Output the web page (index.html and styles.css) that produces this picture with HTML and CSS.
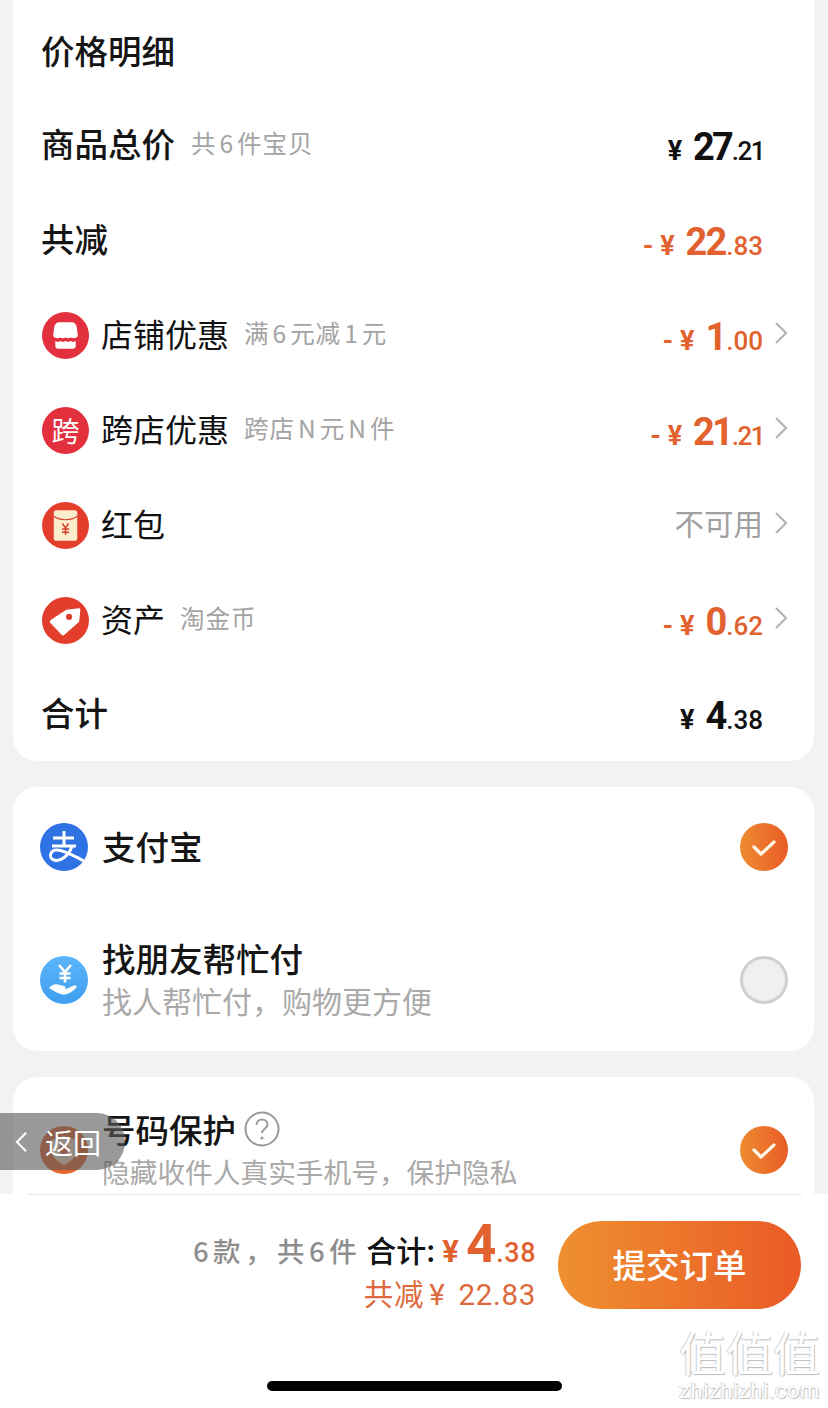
FILE: index.html
```html
<!DOCTYPE html>
<html lang="zh-CN">
<head>
  <meta charset="UTF-8">
  <meta name="viewport" content="width=device-width, initial-scale=1.0">
  <title>确认订单</title>
  <link rel="stylesheet" href="styles.css">
</head>
<body>
  <div class="page">
    <div class="scroll">
      <div class="card price-card">
        <div class="row row-first"><div class="left"><span class="title-text">价格明细</span></div></div>

        <div class="row row-plain">
          <div class="left"><span class="title-text">商品总价</span><span class="note">共<span class="gap">6</span>件宝贝</span></div>
          <div class="amount"><span class="yen">¥</span><span class="int int-tight">27</span><span class="dec dec-narrow">.21</span></div>
        </div>

        <div class="row row-plain">
          <div class="left"><span class="title-text">共减</span></div>
          <div class="amount orange"><span class="yen">- ¥</span><span class="int">22</span><span class="dec">.83</span></div>
        </div>

        <div class="row">
          <div class="left">
            <svg class="icon" viewBox="0 0 46 46">
              <circle cx="23" cy="23" r="23" fill="#e3303f"/>
              <path d="M17 10h12c3 0 4.500 2 5 5l1 7c.2 1.500-.3 2.500-1.500 3-1.800 1-3.200 1-5 0-1.800 1-3.700 1-5.500 0-1.800 1-3.700 1-5.500 0-1.800 1-3.200 1-5 0-1.200-.5-1.700-1.500-1.500-3l1-7c.5-3 2-5 5-5z" fill="#fff"/>
              <path d="M13 28.500c1.700 1 3.300 1 5 0 1.700 1 3.300 1 5 0 1.700 1 3.300 1 5 0 1.700 1 3.300 1 5 0V33a3 3 0 0 1-3 3H16a3 3 0 0 1-3-3z" fill="#fff"/>
            </svg>
            <span class="label">店铺优惠</span><span class="note">满<span class="gap">6</span>元减<span class="gap">1</span>元</span>
          </div>
          <div class="right">
            <div class="amount orange"><span class="yen">- ¥</span><span class="int">1</span><span class="dec">.00</span></div>
            <svg class="arrow" viewBox="0 0 14 24"><path d="M2 2l10 10L2 22"/></svg>
          </div>
        </div>

        <div class="row">
          <div class="left">
            <span class="icon icon-text icon-red">跨</span>
            <span class="label">跨店优惠</span><span class="note">跨店<span class="gap">N</span>元<span class="gap">N</span>件</span>
          </div>
          <div class="right">
            <div class="amount orange"><span class="yen">- ¥</span><span class="int int-tight">21</span><span class="dec dec-narrow">.21</span></div>
            <svg class="arrow" viewBox="0 0 14 24"><path d="M2 2l10 10L2 22"/></svg>
          </div>
        </div>

        <div class="row">
          <div class="left">
            <svg class="icon" viewBox="0 0 46 46">
              <circle cx="23" cy="23" r="23" fill="#e33d2b"/>
              <rect x="11.500" y="8" width="23" height="30" rx="2.500" fill="#fbeccb"/>
              <path d="M11.500 14c6 4.500 17 4.500 23 0" fill="none" stroke="#d8402c" stroke-width="1.200"/>
              <path d="M20 21l3 4.500 3-4.500M23 25.500V32M19.500 26.500h7M19.500 29.500h7" fill="none" stroke="#d8402c" stroke-width="1.500"/>
            </svg>
            <span class="label">红包</span>
          </div>
          <div class="right">
            <div class="unavailable">不可用</div>
            <svg class="arrow" viewBox="0 0 14 24"><path d="M2 2l10 10L2 22"/></svg>
          </div>
        </div>

        <div class="row">
          <div class="left">
            <svg class="icon" viewBox="0 0 46 46">
              <circle cx="23" cy="23" r="23" fill="#e33d2b"/>
              <path d="M24 12.500l12-1.500c1-.1 1.600.5 1.500 1.400l-1 11c-.1.600-.3 1-.7 1.400L22 37c-.8.8-2 .8-2.800 0l-11-11.500c-.8-.8-.8-2 0-2.800L23 13c.3-.3.600-.4 1-.5z" fill="#fff"/>
              <circle cx="26.500" cy="19.500" r="3" fill="#d8402c"/>
            </svg>
            <span class="label">资产</span><span class="note">淘金币</span>
          </div>
          <div class="right">
            <div class="amount orange"><span class="yen">- ¥</span><span class="int">0</span><span class="dec">.62</span></div>
            <svg class="arrow" viewBox="0 0 14 24"><path d="M2 2l10 10L2 22"/></svg>
          </div>
        </div>

        <div class="row row-plain row-last">
          <div class="left"><span class="title-text">合计</span></div>
          <div class="amount"><span class="yen">¥</span><span class="int">4</span><span class="dec">.38</span></div>
        </div>
      </div>

      <div class="card pay-card">
        <div class="opt opt-alipay">
          <div class="left">
            <svg class="icon opt-icon" viewBox="0 0 48 48">
              <circle cx="24" cy="24" r="24" fill="#2f72e4"/>
              <path d="M13 15h21M24 8v15M12 23h24M32 23c-3 10-12 16-18 14-6-2-4-10 3-10 7 0 17 6 27 11" fill="none" stroke="#fff" stroke-width="3"/>
            </svg>
            <span class="title-text">支付宝</span>
          </div>
          <svg class="check" viewBox="0 0 48 48"><use href="#check-mark"/></svg>
        </div>
        <div class="opt opt-friend">
          <div class="left">
            <svg class="icon opt-icon" viewBox="0 0 48 48">
              <defs>
                <linearGradient id="sky" x1="0" y1="0" x2="0" y2="1">
                  <stop offset="0" stop-color="#5cb6fb"/>
                  <stop offset="1" stop-color="#3f9ef0"/>
                </linearGradient>
              </defs>
              <circle cx="24" cy="24" r="24" fill="url(#sky)"/>
              <path d="M19 9l6 7 6-7M25 16v10.500M19.500 17.500h11M19.500 22h11" fill="none" stroke="#fff" stroke-width="2.600"/>
              <path d="M9 32c3-3.500 6-4.500 9-3.500l6 1.500c2 .5 2 3 0 3h-5 7l8-3.500c2-.8 3.500 1 2 2.500-3 3-7 6-11 6.500-5 .5-10-3-16-6.500z" fill="#fff"/>
            </svg>
            <div class="opt-text">
              <div class="title-text">找朋友帮忙付</div>
              <div class="sub sub-large">找人帮忙付&#65292;购物更方便</div>
            </div>
          </div>
          <span class="radio"></span>
        </div>
      </div>

      <div class="card protect-card">
        <div class="opt opt-protect">
          <div class="left">
            <svg class="icon opt-icon" viewBox="0 0 48 48">
              <circle cx="24" cy="24" r="24" fill="#e8622a"/>
              <path d="M24 10l12 4v11c0 7-6 11-12 14-6-3-12-7-12-14V14z" fill="#f6d9c4"/>
              <circle cx="24" cy="23" r="5" fill="#e8622a"/>
            </svg>
            <div class="opt-text">
              <div class="title-line">
                <span class="title-text">号码保护</span>
                <svg class="help" viewBox="0 0 36 36">
                  <circle cx="18" cy="18" r="16.500"/>
                  <path d="M12.500 14c0-3.500 2.500-5.500 5.500-5.500s5.500 2 5.500 5c0 4-5.500 4.500-5.500 8.500"/>
                  <circle class="help-dot" cx="18" cy="27" r="1.600"/>
                </svg>
              </div>
              <div class="sub">隐藏收件人真实手机号&#65292;保护隐私</div>
            </div>
          </div>
          <svg class="check" viewBox="0 0 48 48"><use href="#check-mark"/></svg>
        </div>
      </div>
    </div>

    <div class="footer">
      <div class="footer-line"></div>
      <div class="submit-bar">
        <div class="totals">
          <div class="total-line">
            <span class="count">6款&#65292;共6件</span>
            <span class="total-label">合计:</span>
            <span class="total-price"><span class="yen">¥</span><span class="int">4</span><span class="dec">.38</span></span>
          </div>
          <div class="saved">共减<span class="saved-yen">¥</span> 22.83</div>
        </div>
        <div class="submit">提交订单</div>
      </div>
      <div class="home-bar"></div>
    </div>

    <div class="back">
      <svg class="back-arrow" viewBox="0 0 14 24"><path d="M12 2L2 12l10 10"/></svg>
      <span>返回</span>
    </div>

    <div class="watermark">
      <div class="wm-big">值值值</div>
      <div class="wm-small">zhizhizhi.com</div>
    </div>
  </div>

  <svg class="defs" width="0" height="0">
    <defs>
      <linearGradient id="orange" x1="0" y1="0" x2="1" y2="0">
        <stop offset="0" stop-color="#ee8b30"/>
        <stop offset="1" stop-color="#e95c27"/>
      </linearGradient>
      <g id="check-mark">
        <circle cx="24" cy="24" r="24" fill="url(#orange)"/>
        <path d="M14 24l7 7 13-12" fill="none" stroke="#fff7e8" stroke-width="3.200" stroke-linecap="round" stroke-linejoin="round"/>
      </g>
    </defs>
  </svg>
</body>
</html>
```

FILE: styles.css
```css
* {
  box-sizing: border-box;
}
body {
  margin: 0;
  padding: 0;
  font-family: "Noto Sans CJK SC", "Noto Sans", sans-serif;
  background: #f2f2f2;
  color: #111;
}
.page {
  position: relative;
  height: 1408px;
  overflow: hidden;
  display: flex;
  flex-direction: column;
}
.scroll {
  height: 1194px;
  overflow: hidden;
  flex: none;
}
.card {
  background: #fff;
  border-radius: 24px;
  margin: 0 14px 26px 13px;
}
.price-card {
  margin-top: -23px;
  padding-top: 25.500px;
}
.row {
  height: 95px;
  padding: 0 26px 0 28px;
  display: flex;
  align-items: center;
  justify-content: space-between;
}
.row-plain {
  padding-right: 51px;
}
.row-last {
  height: 93px;
}
.left {
  display: flex;
  align-items: center;
}
.right {
  display: flex;
  align-items: center;
  gap: 11px;
}
.title-text {
  font-size: 33.500px;
  font-weight: 500;
  line-height: 42px;
  color: #151515;
}
.left > .title-text,
.label,
.note {
  margin-bottom: 5px;
}
.row-first .left > .title-text,
.opt-alipay .left > .title-text {
  margin-bottom: 1px;
}
.label {
  font-size: 32px;
  line-height: 42px;
  margin-left: 12px;
}
.note {
  font-size: 24.500px;
  letter-spacing: 1px;
  color: #a3a3a3;
  margin-left: 16px;
}
.label + .note {
  margin-left: 15px;
}
.gap {
  margin: 0 3px;
}
.icon {
  width: 47px;
  height: 47px;
  margin-left: 1px;
  flex: none;
}
.icon-text {
  border-radius: 50%;
  color: #fff;
  display: flex;
  align-items: center;
  justify-content: center;
  font-size: 28px;
  line-height: 1;
}
.icon-red {
  background: #e3303f;
}
.amount {
  font-family: "Roboto", sans-serif;
  font-weight: 700;
  padding-top: 4px;
  white-space: nowrap;
  color: #111;
}
.orange {
  color: #e2622f;
}
.yen {
  font-size: 27px;
  margin-right: 11px;
}
.int {
  font-size: 38px;
  letter-spacing: -2px;
  margin-right: 1px;
}
.int-tight {
  letter-spacing: -3px;
  margin-right: 1px;
}
.dec {
  font-size: 26px;
  font-weight: 500;
}
.dec-narrow {
  letter-spacing: -1.500px;
  margin-right: -1px;
}
.unavailable {
  font-size: 29.500px;
  color: #a0a0a0;
  margin-bottom: 7px;
}
.arrow {
  width: 14px;
  height: 24px;
  margin-bottom: 4px;
  fill: none;
  stroke: #b4b4b4;
  stroke-width: 2.200;
}
.opt {
  padding: 0 26px 0 27px;
  display: flex;
  align-items: center;
  justify-content: space-between;
}
.opt-alipay {
  height: 122px;
  padding-bottom: 2px;
}
.opt-friend {
  height: 142px;
}
.opt-friend .opt-text {
  margin-bottom: 2px;
}
.opt-protect {
  height: 146px;
}
.opt-icon {
  width: 48px;
  height: 48px;
  margin: 0 14px 0 0;
}
.check {
  width: 48px;
  height: 48px;
  flex: none;
}
.radio {
  width: 48px;
  height: 48px;
  border-radius: 50%;
  border: 3px solid #cfcfcf;
  background: #f0f0f0;
  flex: none;
}
.sub {
  font-size: 27.700px;
  line-height: 42px;
  color: #a9a9a9;
}
.sub-large {
  font-size: 30px;
}
.title-line {
  display: flex;
  align-items: center;
  gap: 8px;
}
.help {
  width: 36px;
  height: 36px;
  fill: none;
  stroke: #999;
  stroke-width: 2;
}
.help-dot {
  fill: #999;
  stroke: none;
}
.footer {
  flex: 1;
  background: #fff;
  position: relative;
  padding-top: 27px;
}
.footer-line {
  position: absolute;
  top: 0;
  left: 27px;
  right: 26px;
  height: 1px;
  background: #e8e8e8;
}
.submit-bar {
  display: flex;
  justify-content: flex-end;
  align-items: flex-start;
  height: 88px;
  padding-right: 27px;
  gap: 22px;
}
.totals {
  text-align: right;
  margin-top: -3px;
}
.total-line {
  display: flex;
  align-items: baseline;
  justify-content: flex-end;
  height: 48px;
  line-height: 1;
}
.count {
  font-size: 27.500px;
  font-weight: 500;
  letter-spacing: 4.500px;
  color: #8e8e8e;
  margin-right: 5px;
}
.total-label {
  font-size: 30px;
  font-weight: 500;
  margin-right: 7px;
}
.total-price {
  font-family: "Roboto", sans-serif;
  font-weight: 700;
  color: #e2622f;
}
.total-price .yen {
  font-size: 31px;
  margin-right: 7px;
}
.total-price .int {
  font-size: 53px;
  letter-spacing: -3px;
  margin-right: 3px;
}
.total-price .dec {
  font-size: 27px;
  letter-spacing: 0.500px;
}
.saved {
  font-family: "Roboto", "Noto Sans CJK SC", sans-serif;
  font-size: 29.500px;
  line-height: 36px;
  letter-spacing: 0.700px;
  margin-top: 11px;
  color: #dd6a3c;
}
.saved-yen {
  margin: 0 5px;
}
.submit {
  width: 243px;
  height: 88px;
  padding-bottom: 4px;
  border-radius: 44px;
  background: linear-gradient(to right, #ee9030, #ea5a26);
  color: #fff;
  font-size: 33.500px;
  font-weight: 500;
  display: flex;
  align-items: center;
  justify-content: center;
}
.home-bar {
  width: 295px;
  height: 10px;
  border-radius: 5px;
  background: #000;
  margin: 72px 0 0 267px;
}
.back {
  position: absolute;
  left: 0;
  top: 1113px;
  width: 125px;
  height: 57px;
  border-radius: 0 28px 28px 0;
  background: rgba(90, 90, 90, 0.62);
  color: #fff;
  font-size: 28px;
  display: flex;
  align-items: center;
  gap: 17px;
  padding-left: 15px;
}
.back-arrow {
  width: 13px;
  height: 22px;
  fill: none;
  stroke: #fff;
  stroke-width: 2.200;
}
.watermark {
  position: absolute;
  right: 8px;
  top: 1327px;
  text-align: center;
  color: #fff;
  text-shadow: 1px 1px 1px #bdbdbd, -1px 0 1px #d0d0d0;
}
.wm-big {
  font-size: 47px;
  line-height: 48px;
}
.wm-small {
  font-family: "Roboto", sans-serif;
  font-size: 22px;
  letter-spacing: 0.500px;
  line-height: 20px;
  margin-top: 6px;
}
.defs {
  position: absolute;
}
```
